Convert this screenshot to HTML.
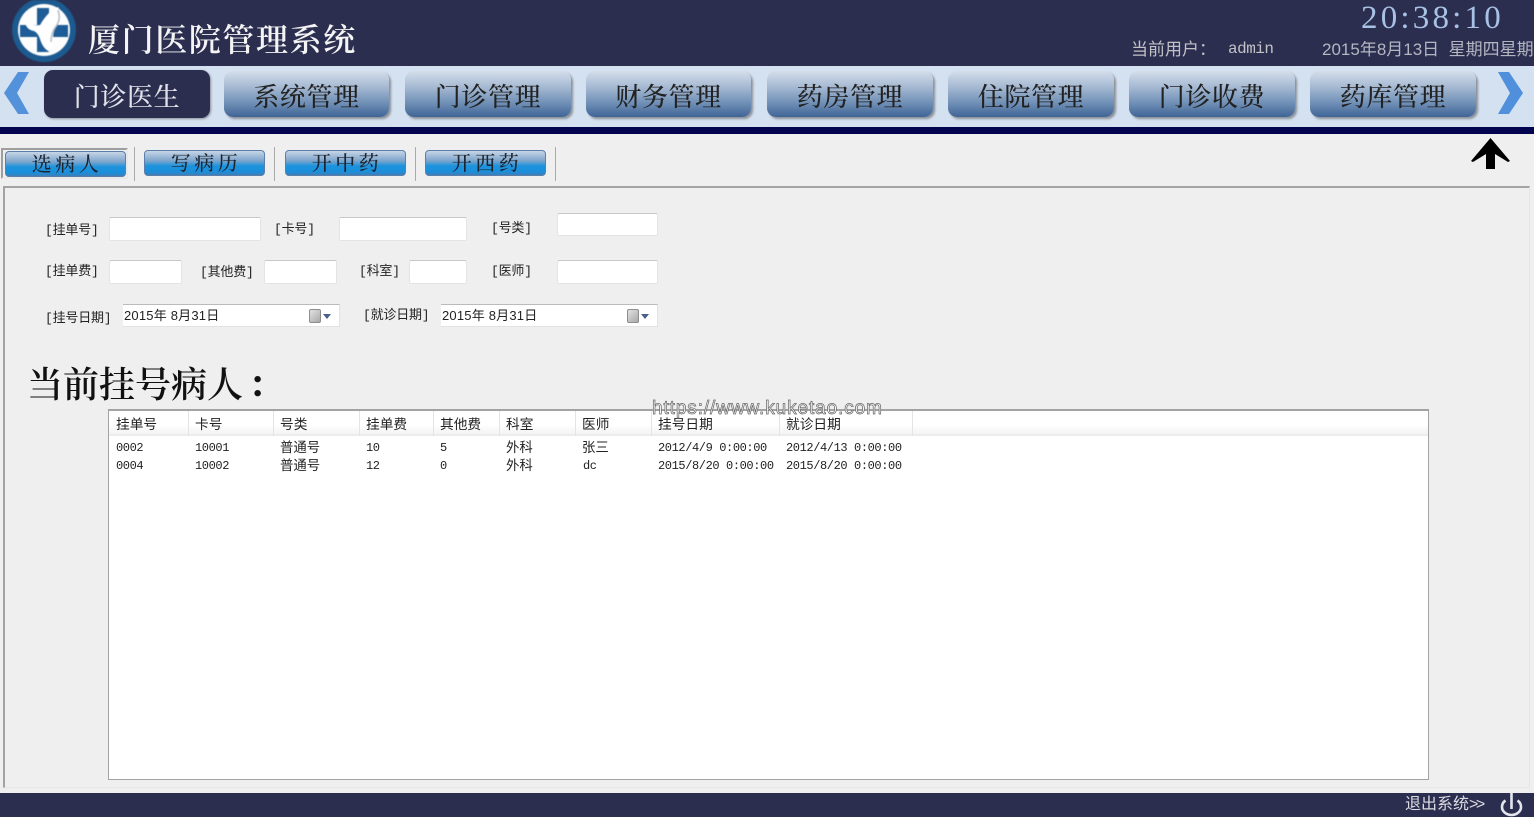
<!DOCTYPE html>
<html lang="zh"><head><meta charset="utf-8"><title>厦门医院管理系统</title>
<style>
*{box-sizing:border-box}
html,body{margin:0;padding:0;width:1534px;height:817px;overflow:hidden;background:#efefef}
body{position:relative;font-family:"Liberation Serif","Noto Serif CJK SC",serif;color:#111}
.a{position:absolute;white-space:nowrap;line-height:1}
.s{font-family:"Liberation Sans","WenQuanYi Zen Hei","Noto Sans CJK SC",sans-serif}
.m{font-family:"Liberation Mono","WenQuanYi Zen Hei",monospace}
.nav{position:absolute;top:71px;height:46px;border-radius:9px;background:linear-gradient(#d4deeb 0,#a5b9d2 35%,#6f8fb6 70%,#3f6495 100%);box-shadow:2px 2px 2px #8a8f96;font:500 26px/49px "Noto Serif CJK SC",serif;letter-spacing:.6px;text-align:center;color:#222}
.sub{position:absolute;top:150px;height:26px;width:121px;border-radius:4px;border:1px solid #5b7faa;background:linear-gradient(#c6d6e6 0,#7fa6cc 40%,#1d93dc 62%,#1a8fdc 85%,#3c7fb8 100%);font:500 20px/22px "Noto Serif CJK SC",serif;letter-spacing:3.500px;text-indent:3px;text-align:center;color:#1c2430}
.sep{position:absolute;top:147px;width:1px;height:34px;background:#aaa}
.in{position:absolute;background:#fff;border:1px solid #e4e4e4;border-top-color:#c8c8c8;border-radius:2px}
.lb{position:absolute;margin:1px 0 0 -1px;font:13px/14px "Liberation Mono","WenQuanYi Zen Hei",monospace;letter-spacing:-.2px;white-space:nowrap;color:#222}
.dt{position:absolute;background:#fff;border-top:1px solid #bbb;border-right:1px solid #e2e2e2;border-bottom:1px solid #e2e2e2;height:23px;font:13px/21px "Liberation Sans","WenQuanYi Zen Hei",sans-serif;letter-spacing:.2px;padding-left:1px;white-space:nowrap;color:#222}
.cal{position:absolute;top:4px;width:12px;height:14px;background:linear-gradient(135deg,#e2e2e2,#a8a8a8);border:1px solid #8d8d8d;border-radius:2px}
.tri{position:absolute;top:9px;width:0;height:0;border:4px solid transparent;border-top:5px solid #47608c;border-bottom:0}
.th{position:absolute;top:417px;font:13.700px/16px "Liberation Sans","WenQuanYi Zen Hei",sans-serif;white-space:nowrap;color:#222}
.td{position:absolute;font:12px/14px "Liberation Mono","WenQuanYi Zen Hei",monospace;letter-spacing:-.4px;white-space:nowrap;color:#222}
.td.c{font:13.400px/14px "Liberation Sans","WenQuanYi Zen Hei",sans-serif;letter-spacing:0}
.cl{position:absolute;top:411px;width:1px;height:25px;background:#e4e4e4}
</style></head><body>

<div class="a" style="left:0;top:0;width:1534px;height:66px;background:#2c2e50"></div>
<svg class="a" style="left:11px;top:0;filter:blur(.4px)" width="68" height="62" viewBox="0 0 68 62">
<circle cx="33" cy="30" r="32" fill="#1c5a90"/>
<circle cx="33" cy="30" r="26" fill="#fdfdfd"/>
<path d="M26 8h12v17h19v12H38v15H26V37H9V25h17z" fill="#1d5c96"/>
<path d="M14 23q9 3 15 2q4-7 9-12q5-4 9-6q5 7 1 16q-6 7-6 15q1 9-3 14q-7-3-10-13q-2-6-6-8q-7-1-9-8z" fill="#fff"/>
<path d="M47 10q3 8-1 15q-6 7-6 17" fill="none" stroke="#b4bcc4" stroke-width="1.500"/>
</svg>
<div class="a" style="left:88px;top:21px;font:600 32px/34px 'Noto Serif CJK SC',serif;letter-spacing:1.600px;color:#f4f4f4">厦门医院管理系统</div>
<div class="a" style="left:1361px;top:2px;font:33px/33px 'Liberation Serif',serif;letter-spacing:3.200px;color:#a7c2e4">20:38:10</div>
<div class="a s" style="left:1131px;top:41px;font-size:17px;color:#c2c2c6">当前用户：</div>
<div class="a m" style="left:1228px;top:41px;font-size:16px;color:#c2c2c6;letter-spacing:-.5px">admin</div>
<div class="a s" style="left:1322px;top:41px;font-size:17px;color:#b4b6c2;width:212px;overflow:hidden;letter-spacing:0">2015年8月13日&nbsp; 星期四星期四</div>

<div class="a" style="left:0;top:66px;width:1534px;height:61px;background:#d4e1f0"></div>
<div class="a" style="left:0;top:127px;width:1534px;height:7px;background:#02044f"></div>
<svg class="a" style="left:3px;top:72px" width="28" height="43"><path d="M26 0H15L1 21l14 21h11L14 21z" fill="#5391db"/></svg>
<svg class="a" style="left:1496px;top:72px" width="28" height="43"><path d="M2 0h11l14 21-14 21H2l12-21z" fill="#4f8fdb"/></svg>

<div class="nav" style="left:44px;width:166px;top:70px;height:48px;background:#2c2e50;color:#e2e2ea;box-shadow:1px 1px 2px #8a8f96;line-height:52px">门诊医生</div>
<div class="nav" style="left:224px;width:165px">系统管理</div>
<div class="nav" style="left:405px;width:166px">门诊管理</div>
<div class="nav" style="left:586px;width:165px">财务管理</div>
<div class="nav" style="left:767px;width:166px">药房管理</div>
<div class="nav" style="left:948px;width:166px">住院管理</div>
<div class="nav" style="left:1129px;width:166px">门诊收费</div>
<div class="nav" style="left:1310px;width:166px">药库管理</div>

<div class="a" style="left:1px;top:148px;width:127px;height:31px;border:2px solid #9e9e9e;border-right-color:#e9e9e9;border-bottom-color:#e9e9e9"></div>
<div class="sub" style="left:5px;top:151px">选病人</div>
<div class="sep" style="left:134px"></div>
<div class="sub" style="left:144px">写病历</div>
<div class="sep" style="left:274px"></div>
<div class="sub" style="left:285px">开中药</div>
<div class="sep" style="left:415px"></div>
<div class="sub" style="left:425px">开西药</div>
<div class="sep" style="left:555px"></div>
<svg class="a" style="left:1470px;top:137px" width="41" height="33"><path d="M20.500 1L40 24l-2 1-13-8v15h-9V17L3 25l-2-1z" fill="#000"/></svg>

<div class="a" style="left:3px;top:186px;width:1527px;height:602px;border:2px solid #a3a3a3;border-right:1px solid #e6e6e6;border-bottom:1px solid #e6e6e6"></div>

<div class="lb" style="left:46px;top:223px">[挂单号]</div><div class="in" style="left:109px;top:217px;width:152px;height:24px"></div>
<div class="lb" style="left:275px;top:222px">[卡号]</div><div class="in" style="left:339px;top:217px;width:128px;height:24px"></div>
<div class="lb" style="left:492px;top:221px">[号类]</div><div class="in" style="left:557px;top:213px;width:101px;height:23px"></div>
<div class="lb" style="left:46px;top:264px">[挂单费]</div><div class="in" style="left:109px;top:260px;width:73px;height:24px"></div>
<div class="lb" style="left:201px;top:265px">[其他费]</div><div class="in" style="left:264px;top:260px;width:73px;height:24px"></div>
<div class="lb" style="left:360px;top:264px">[科室]</div><div class="in" style="left:409px;top:260px;width:58px;height:24px"></div>
<div class="lb" style="left:492px;top:264px">[医师]</div><div class="in" style="left:557px;top:260px;width:101px;height:24px"></div>
<div class="lb" style="left:46px;top:311px">[挂号日期]</div>
<div class="dt" style="left:123px;top:304px;width:217px">2015年 8月31日<span class="cal" style="left:186px"></span><span class="tri" style="left:200px"></span></div>
<div class="lb" style="left:364px;top:308px">[就诊日期]</div>
<div class="dt" style="left:441px;top:304px;width:217px">2015年 8月31日<span class="cal" style="left:186px"></span><span class="tri" style="left:200px"></span></div>

<div class="a" style="left:27px;top:362px;font:600 36px/42px 'Noto Serif CJK SC',serif;color:#111">当前挂号病人<span style="position:relative;left:5px;font-weight:700">：</span></div>

<div class="a" style="left:108px;top:409px;width:1321px;height:371px;background:#fff;border:1px solid #a3a3a3;border-top-width:2px"></div>
<div class="a" style="left:109px;top:411px;width:1319px;height:25px;background:linear-gradient(#fff 0,#fff 60%,#f3f3f3 100%);border-bottom:2px solid #ececec"></div>
<i class="cl" style="left:188px"></i><i class="cl" style="left:273px"></i><i class="cl" style="left:359px"></i><i class="cl" style="left:433px"></i><i class="cl" style="left:499px"></i><i class="cl" style="left:575px"></i><i class="cl" style="left:651px"></i><i class="cl" style="left:779px"></i><i class="cl" style="left:912px"></i>
<div class="th" style="left:116px">挂单号</div><div class="th" style="left:195px">卡号</div><div class="th" style="left:280px">号类</div><div class="th" style="left:366px">挂单费</div><div class="th" style="left:440px">其他费</div><div class="th" style="left:506px">科室</div><div class="th" style="left:582px">医师</div><div class="th" style="left:658px">挂号日期</div><div class="th" style="left:786px">就诊日期</div>

<div class="td" style="left:116px;top:441px">0002</div><div class="td" style="left:195px;top:441px">10001</div><div class="td c" style="left:280px;top:441px">普通号</div><div class="td" style="left:366px;top:441px">10</div><div class="td" style="left:440px;top:441px">5</div><div class="td c" style="left:506px;top:441px">外科</div><div class="td c" style="left:582px;top:441px">张三</div><div class="td" style="left:658px;top:441px">2012/4/9 0:00:00</div><div class="td" style="left:786px;top:441px">2012/4/13 0:00:00</div>
<div class="td" style="left:116px;top:459px">0004</div><div class="td" style="left:195px;top:459px">10002</div><div class="td c" style="left:280px;top:459px">普通号</div><div class="td" style="left:366px;top:459px">12</div><div class="td" style="left:440px;top:459px">0</div><div class="td c" style="left:506px;top:459px">外科</div><div class="td" style="left:583px;top:459px">dc</div><div class="td" style="left:658px;top:459px">2015/8/20 0:00:00</div><div class="td" style="left:786px;top:459px">2015/8/20 0:00:00</div>

<div class="a" style="left:652px;top:400px;font:19px/18px 'Liberation Sans',sans-serif;color:#f8f8f8;-webkit-text-stroke:.7px #666;letter-spacing:.9px">https://www.kuketao.com</div>

<div class="a" style="left:0;top:793px;width:1534px;height:24px;background:#2c2e50"></div>
<div class="a s" style="left:1405px;top:797px;font-size:16px;color:#dcdce2">退出系统<span style="letter-spacing:-2.500px">&gt;&gt;</span></div>
<svg class="a" style="left:1500px;top:790px" width="24" height="27"><path d="M5.500 10.500C2.500 12.500 2 15 2 17a9.500 8 0 0 0 19 0c0-2-.5-4.500-3.500-6.500" fill="none" stroke="#e4e6ee" stroke-width="2.600"/><path d="M11.500 3v16" stroke="#e4e6ee" stroke-width="2.600"/></svg>
</body></html>
